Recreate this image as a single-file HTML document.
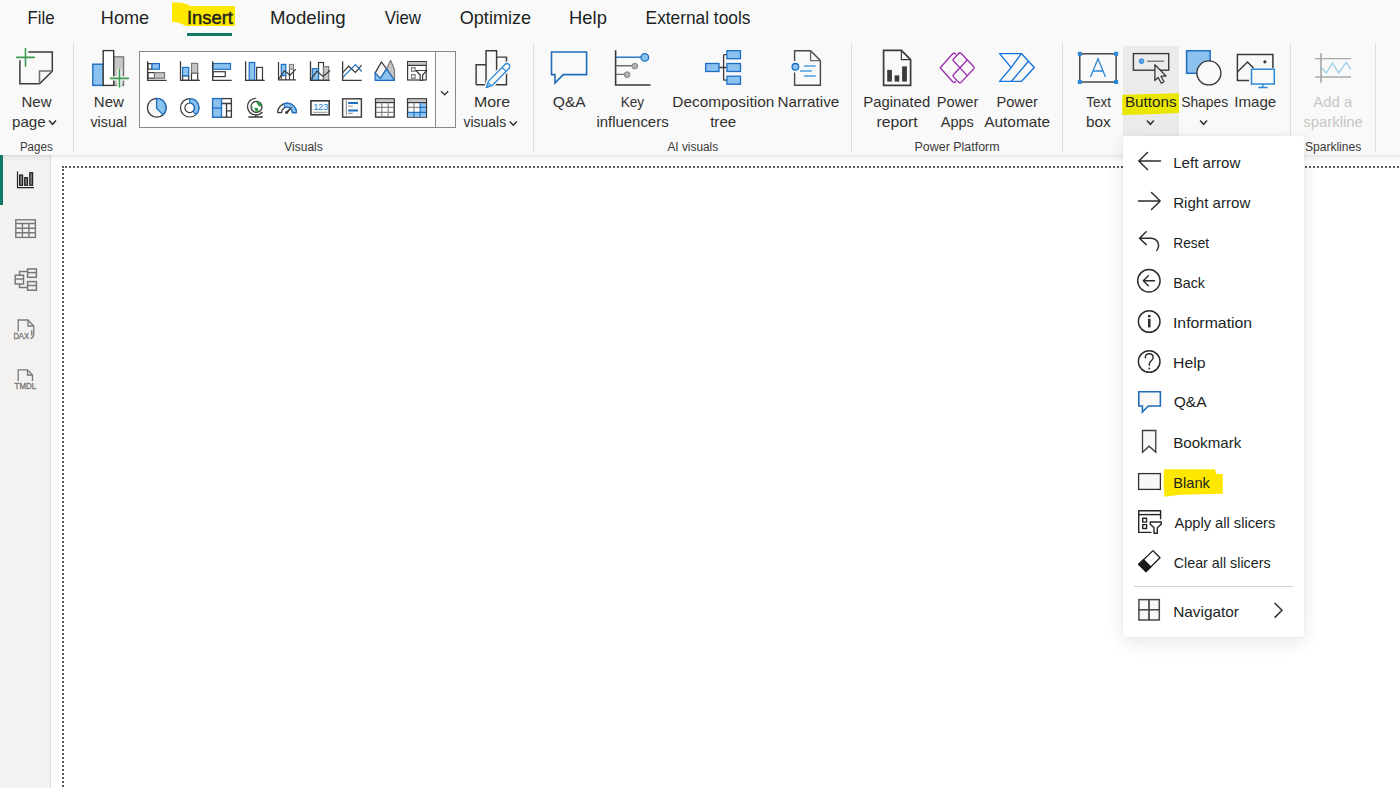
<!DOCTYPE html>
<html><head><meta charset="utf-8">
<style>
html,body{margin:0;padding:0;width:1400px;height:788px;overflow:hidden;background:#fff;font-family:"Liberation Sans", sans-serif;}
svg{position:absolute;left:0;top:0;display:block}
.menu{position:absolute;left:1123px;top:136px;width:181px;height:501px;background:#fff;border-radius:3px;box-shadow:0 5px 18px rgba(0,0,0,0.10),0 0 3px rgba(0,0,0,0.05);}
</style></head><body>
<svg class="base" width="1400" height="788" viewBox="0 0 1400 788"><defs>
<linearGradient id="shd" x1="0" y1="0" x2="0" y2="1">
<stop offset="0" stop-color="#000" stop-opacity="0.10"/>
<stop offset="0.35" stop-color="#000" stop-opacity="0.04"/>
<stop offset="1" stop-color="#000" stop-opacity="0"/>
</linearGradient>
</defs><rect x="0" y="0" width="1400" height="155" fill="#f9f9f9"/><rect x="0" y="155" width="50" height="633" fill="#f3f2f1"/><rect x="50" y="155" width="1" height="633" fill="#e1dfdd"/><rect x="51" y="155" width="1349" height="633" fill="#ffffff"/><rect x="62" y="166" width="2" height="2" fill="#5a5a5a"/><line x1="65" y1="167" x2="1400" y2="167" stroke="#5a5a5a" stroke-width="2" stroke-dasharray="2 2"/><line x1="63" y1="169" x2="63" y2="788" stroke="#5a5a5a" stroke-width="2" stroke-dasharray="2 2"/><rect x="0" y="155" width="1400" height="6.5" fill="url(#shd)"/><rect x="0" y="155" width="3" height="50" fill="#117865"/><g font-family='"Liberation Sans", sans-serif'><path d="M172,2.5 C180,2 186,3 190,6 L235,6 L235,26 L186,26 C180,23 176,22 172,21.8 Z" fill="#ffe800"/><text x="41.1" y="24" font-size="17.8" fill="#201f1e" text-anchor="middle"  textLength="27.13" lengthAdjust="spacingAndGlyphs">File</text><text x="125" y="24" font-size="17.8" fill="#201f1e" text-anchor="middle"  textLength="48.31" lengthAdjust="spacingAndGlyphs">Home</text><text x="209.9" y="24" font-size="17.8" fill="#201f1e" text-anchor="middle" stroke="#201f1e" stroke-width="0.45" textLength="45.96" lengthAdjust="spacingAndGlyphs">Insert</text><text x="307.85" y="24" font-size="17.8" fill="#201f1e" text-anchor="middle"  textLength="75.66" lengthAdjust="spacingAndGlyphs">Modeling</text><text x="402.9" y="24" font-size="17.8" fill="#201f1e" text-anchor="middle"  textLength="36.28" lengthAdjust="spacingAndGlyphs">View</text><text x="495.4" y="24" font-size="17.8" fill="#201f1e" text-anchor="middle"  textLength="71.23" lengthAdjust="spacingAndGlyphs">Optimize</text><text x="588" y="24" font-size="17.8" fill="#201f1e" text-anchor="middle"  textLength="37.73" lengthAdjust="spacingAndGlyphs">Help</text><text x="698" y="24" font-size="17.8" fill="#201f1e" text-anchor="middle"  textLength="104.77" lengthAdjust="spacingAndGlyphs">External tools</text><rect x="187" y="33" width="45" height="3" fill="#117865"/><rect x="73" y="43" width="1" height="110" fill="#e1dfdd"/><rect x="533" y="43" width="1" height="110" fill="#e1dfdd"/><rect x="851" y="43" width="1" height="110" fill="#e1dfdd"/><rect x="1062" y="43" width="1" height="110" fill="#e1dfdd"/><rect x="1290" y="43" width="1" height="110" fill="#e1dfdd"/><rect x="1375" y="43" width="1" height="110" fill="#e1dfdd"/><text x="36.5" y="107" font-size="14.6" fill="#323130" text-anchor="middle"  textLength="30.03" lengthAdjust="spacingAndGlyphs">New</text><text x="12.016548463356974" y="126.5" font-size="14.6" fill="#323130" text-anchor="start"  textLength="33.66" lengthAdjust="spacingAndGlyphs">page</text><path d="M49.0,120.5 L52.5,124.3 L56.0,120.5" fill="none" stroke="#323130" stroke-width="1.5"/><text x="108.9" y="107" font-size="14.6" fill="#323130" text-anchor="middle"  textLength="30.03" lengthAdjust="spacingAndGlyphs">New</text><text x="108.7" y="126.5" font-size="14.6" fill="#323130" text-anchor="middle"  textLength="36.42" lengthAdjust="spacingAndGlyphs">visual</text><text x="492.1" y="107" font-size="14.6" fill="#323130" text-anchor="middle"  textLength="36.24" lengthAdjust="spacingAndGlyphs">More</text><text x="463.5303482587065" y="126.5" font-size="14.6" fill="#323130" text-anchor="start"  textLength="42.58" lengthAdjust="spacingAndGlyphs">visuals</text><path d="M509.79999999999995,121.4 L513.3,125.2 L516.8,121.4" fill="none" stroke="#323130" stroke-width="1.5"/><text x="569.3" y="107" font-size="14.6" fill="#323130" text-anchor="middle"  textLength="32.93" lengthAdjust="spacingAndGlyphs">Q&amp;A</text><text x="632.4" y="107" font-size="14.6" fill="#323130" text-anchor="middle"  textLength="23.46" lengthAdjust="spacingAndGlyphs">Key</text><text x="632.5" y="126.5" font-size="14.6" fill="#323130" text-anchor="middle"  textLength="72.21" lengthAdjust="spacingAndGlyphs">influencers</text><text x="723.3" y="107" font-size="14.6" fill="#323130" text-anchor="middle"  textLength="102.03" lengthAdjust="spacingAndGlyphs">Decomposition</text><text x="723.2" y="126.5" font-size="14.6" fill="#323130" text-anchor="middle"  textLength="26.06" lengthAdjust="spacingAndGlyphs">tree</text><text x="808.4" y="107" font-size="14.6" fill="#323130" text-anchor="middle"  textLength="61.73" lengthAdjust="spacingAndGlyphs">Narrative</text><text x="896.8" y="107" font-size="14.6" fill="#323130" text-anchor="middle"  textLength="66.94" lengthAdjust="spacingAndGlyphs">Paginated</text><text x="897" y="126.5" font-size="14.6" fill="#323130" text-anchor="middle"  textLength="41.14" lengthAdjust="spacingAndGlyphs">report</text><text x="957.5" y="107" font-size="14.6" fill="#323130" text-anchor="middle"  textLength="41.56" lengthAdjust="spacingAndGlyphs">Power</text><text x="957.3" y="126.5" font-size="14.6" fill="#323130" text-anchor="middle"  textLength="33.10" lengthAdjust="spacingAndGlyphs">Apps</text><text x="1017.2" y="107" font-size="14.6" fill="#323130" text-anchor="middle"  textLength="41.56" lengthAdjust="spacingAndGlyphs">Power</text><text x="1017.2" y="126.5" font-size="14.6" fill="#323130" text-anchor="middle"  textLength="65.90" lengthAdjust="spacingAndGlyphs">Automate</text><text x="1098.6" y="107" font-size="14.6" fill="#323130" text-anchor="middle"  textLength="24.69" lengthAdjust="spacingAndGlyphs">Text</text><text x="1098.4" y="126.5" font-size="14.6" fill="#323130" text-anchor="middle"  textLength="24.89" lengthAdjust="spacingAndGlyphs">box</text><text x="1204.7" y="107" font-size="14.6" fill="#323130" text-anchor="middle"  textLength="47.14" lengthAdjust="spacingAndGlyphs">Shapes</text><path d="M1200.1,120.5 L1203.6,124.3 L1207.1,120.5" fill="none" stroke="#323130" stroke-width="1.5"/><text x="1255.3" y="107" font-size="14.6" fill="#323130" text-anchor="middle"  textLength="41.93" lengthAdjust="spacingAndGlyphs">Image</text><text x="1332.7" y="107" font-size="14.6" fill="#c8c6c4" text-anchor="middle"  textLength="38.95" lengthAdjust="spacingAndGlyphs">Add a</text><text x="1333.1" y="126.5" font-size="14.6" fill="#c8c6c4" text-anchor="middle"  textLength="59.65" lengthAdjust="spacingAndGlyphs">sparkline</text><text x="36.3" y="150.8" font-size="12" fill="#3b3a39" text-anchor="middle"  textLength="32.73" lengthAdjust="spacingAndGlyphs">Pages</text><text x="303.5" y="150.8" font-size="12" fill="#3b3a39" text-anchor="middle"  textLength="38.49" lengthAdjust="spacingAndGlyphs">Visuals</text><text x="692.8" y="150.8" font-size="12" fill="#3b3a39" text-anchor="middle"  textLength="50.71" lengthAdjust="spacingAndGlyphs">AI visuals</text><text x="957.1" y="150.8" font-size="12" fill="#3b3a39" text-anchor="middle"  textLength="85.05" lengthAdjust="spacingAndGlyphs">Power Platform</text><text x="1333.1" y="150.8" font-size="12" fill="#3b3a39" text-anchor="middle"  textLength="56.36" lengthAdjust="spacingAndGlyphs">Sparklines</text><rect x="1123" y="46" width="56" height="90" fill="#ebebeb"/><path d="M1122.3,94.8 L1150,94 L1179,93.3 L1179,112.9 L1150,114.2 L1122.3,114.9 Z" fill="#ece700"/><text x="1150.8" y="107" font-size="14.6" fill="#201f1e" text-anchor="middle"  textLength="51.77" lengthAdjust="spacingAndGlyphs">Buttons</text><path d="M1146.9,120.5 L1150.4,124.3 L1153.9,120.5" fill="none" stroke="#323130" stroke-width="1.5"/></g><g fill="none" stroke="#3b3a39" stroke-width="1.5" stroke-linejoin="miter"><path d="M28.4,51.9 L52.3,51.9 L52.3,71.2 L39.5,83.7 L19.9,83.7 L19.9,60.3"/><path d="M39.5,83.7 L39.5,70.9 L52.3,70.9" stroke="#6f6e6d"/></g><path d="M16.1,57.4 L34.8,57.4 M25.5,48.1 L25.5,66.8" stroke="#3b9b50" stroke-width="1.6"/><rect x="113.7" y="56.8" width="9.9" height="28.6" fill="#c8c6c4" stroke="#7a7877" stroke-width="1.3"/><rect x="92.8" y="64.2" width="10.4" height="21.2" fill="#8cc2ef" stroke="#1b6ec2" stroke-width="1.4"/><rect x="103.2" y="50.6" width="10.5" height="34.8" fill="#ffffff" stroke="#3b3a39" stroke-width="1.4"/><path d="M109.9,78.4 L128.9,78.4 M119.5,69.1 L119.5,87.5" stroke="#f9f9f9" stroke-width="4.4"/><path d="M109.9,78.4 L128.9,78.4 M119.5,69.1 L119.5,87.5" stroke="#3b9b50" stroke-width="1.6"/><rect x="139.5" y="51.5" width="316" height="76" fill="#ffffff" stroke="#8a8886" stroke-width="1"/><rect x="435.5" y="52" width="19.5" height="75" fill="#f9f9f9"/><line x1="435.5" y1="51.5" x2="435.5" y2="127.5" stroke="#8a8886" stroke-width="1"/><path d="M441,91.2 L444.6,94.8 L448.2,91.2" fill="none" stroke="#3b3a39" stroke-width="1.4"/><g stroke-width="1.2"><rect x="148" y="63.6" width="4" height="5.6" fill="#ffffff" stroke="#3b3a39"/><rect x="152" y="63.6" width="7.4" height="5.6" fill="#8cc2ef" stroke="#1b6ec2"/><rect x="148" y="72.6" width="6.5" height="5.6" fill="#ffffff" stroke="#3b3a39"/><rect x="154.5" y="72.6" width="10" height="5.6" fill="#c8c6c4" stroke="#7a7877"/><path d="M147.6,61.3 L147.6,80.3 L166.7,80.3" fill="none" stroke="#3b3a39" stroke-width="1.3"/></g><g stroke-width="1.2"><rect x="182.6" y="75.8" width="6.1" height="4.5" fill="#ffffff" stroke="#3b3a39"/><rect x="182.6" y="67.4" width="6.1" height="8.4" fill="#8cc2ef" stroke="#1b6ec2"/><rect x="191.5" y="73" width="6.2" height="7.3" fill="#ffffff" stroke="#3b3a39"/><rect x="191.5" y="63.4" width="6.2" height="9.6" fill="#c8c6c4" stroke="#7a7877"/><path d="M180.5,61.3 L180.5,80.3 L199.8,80.3" fill="none" stroke="#3b3a39" stroke-width="1.3"/></g><g stroke-width="1.2"><rect x="213" y="63.5" width="17.5" height="5.8" fill="#8cc2ef" stroke="#1b6ec2"/><rect x="213" y="71.7" width="12.3" height="4.9" fill="#ffffff" stroke="#3b3a39"/><path d="M212.7,61.3 L212.7,80.3 L231.7,80.3" fill="none" stroke="#3b3a39" stroke-width="1.3"/></g><g stroke-width="1.2"><rect x="249.2" y="62.5" width="5.5" height="17.8" fill="#8cc2ef" stroke="#1b6ec2"/><rect x="256.6" y="67.4" width="5.9" height="12.9" fill="#ffffff" stroke="#3b3a39"/><path d="M245.6,61.3 L245.6,80.3 L264.7,80.3" fill="none" stroke="#3b3a39" stroke-width="1.3"/></g><g stroke-width="1"><rect x="281.3" y="64.4" width="4.5" height="11.2" fill="#8cc2ef" stroke="#1b6ec2" stroke-width="1.2"/><path d="M281.3,75.6 L281.3,80 M285.8,75.6 L285.8,80 M289.4,69.2 L289.4,80 M293.5,69.2 L293.5,80" stroke="#3b3a39"/><rect x="289.4" y="64.4" width="4.1" height="4.8" fill="#c8c6c4" stroke="#7a7877"/><path d="M279,78.7 L284.4,70.8 L290,75.1 L295.9,69.2" fill="none" stroke="#3b3a39" stroke-width="1.2"/><path d="M278.5,61.9 L278.5,79.9 L295.9,79.9" fill="none" stroke="#3b3a39" stroke-width="1.2"/></g><g stroke-width="1.2"><rect x="318.5" y="62.5" width="5" height="17.8" fill="#ffffff" stroke="#3b3a39"/><rect x="323.5" y="66.7" width="5.2" height="13.6" fill="#c8c6c4" stroke="#7a7877"/><rect x="312.3" y="68.7" width="6.2" height="11.6" fill="#8cc2ef" stroke="#1b6ec2"/><path d="M311,79.3 L316.9,71.1 L323.1,76.4 L330,70.5" fill="none" stroke="#3b3a39"/><path d="M310.5,61.3 L310.5,80.3 L329.7,80.3" fill="none" stroke="#3b3a39" stroke-width="1.3"/></g><g fill="none" stroke-width="1.2"><path d="M342.6,72.8 L348.5,66.2 L355.4,72.4 L361.7,65.2" stroke="#3b3a39"/><path d="M342.6,77.7 L355.4,64.6 L361.7,71.5" stroke="#1b6ec2"/><path d="M342.6,61.3 L342.6,80.3 L361.7,80.3" stroke="#3b3a39" stroke-width="1.3"/></g><g stroke-width="1.2" stroke-linejoin="round"><path d="M386.6,68.8 L390.6,60.3 L394.5,69.8 L394.5,80.3 Z" fill="#c8c6c4" stroke="#7a7877"/><path d="M375.1,73.1 L381.4,61.9 L386.6,68.8 L380.4,78.4 Z" fill="#f7f7f7" stroke="#3b3a39"/><path d="M375.1,73.1 L380.4,78.4 L386.6,68.8 L394.5,80.3 L375.1,80.3 Z" fill="#8cc2ef" stroke="#1b6ec2"/></g><g stroke-width="1.2"><rect x="407.6" y="61.6" width="18.6" height="18.4" fill="#ffffff" stroke="#3b3a39"/><rect x="408.2" y="62.2" width="17.4" height="3" fill="#c8c6c4"/><line x1="407.6" y1="65.4" x2="426.2" y2="65.4" stroke="#3b3a39"/><rect x="411.5" y="67.7" width="3.6" height="3.6" fill="none" stroke="#7a7877"/><rect x="411.5" y="74.6" width="3.6" height="3.6" fill="none" stroke="#7a7877"/><path d="M416,70.5 L426.8,70.5 L422.6,75 L422.6,80.4 L420.2,80.4 L420.2,75 Z" fill="#ffffff" stroke="#3b3a39" stroke-linejoin="round"/></g><g stroke-width="1.3"><circle cx="156.8" cy="107.8" r="9.4" fill="#f7f7f7" stroke="#3b3a39"/><path d="M156.6,98.4 A9.4,9.4 0 0 1 163,114.6 L156.6,108.4 Z" fill="#8cc2ef" stroke="#1b6ec2" stroke-linejoin="round"/></g><g stroke-width="1.2" fill="none"><circle cx="189.7" cy="107.8" r="9.2" stroke="#3b3a39"/><circle cx="189.7" cy="107.8" r="4.8" stroke="#3b3a39"/><path d="M189.7,98.6 A9.2,9.2 0 0 1 195.9,114.6 L193,111.3 A4.8,4.8 0 0 0 189.7,103 Z" fill="#8cc2ef" stroke="#1b6ec2"/></g><g stroke-width="1.3"><rect x="212.6" y="98.6" width="18.8" height="18.6" fill="#ffffff" stroke="#3b3a39"/><path d="M221.5,103.5 L231.4,103.5 M226.5,103.5 L226.5,117.2 M226.5,110.8 L231.4,110.8" stroke="#3b3a39" fill="none"/><rect x="212.6" y="98.6" width="8.9" height="18.6" fill="#8cc2ef" stroke="#1b6ec2"/><line x1="212.6" y1="108.1" x2="221.5" y2="108.1" stroke="#1b6ec2"/></g><g stroke-width="1.3" fill="none" stroke="#3b3a39"><circle cx="256.5" cy="106.8" r="5.5" fill="#ffffff"/><path d="M256.2,101.8 C258,101.3 260.5,102.2 261.3,104.2 L261.6,106.3 L259.2,106.5 L257.5,104.5 Z" fill="#2f9a47" stroke="none"/><path d="M254.3,107.7 L257.8,107.9 L258.5,111 L257,112 L255,110.5 Z" fill="#2f9a47" stroke="none"/><path d="M251.6,104.5 C251.3,106 251.3,108 251.9,109.3 L252.6,107 Z" fill="#2f9a47" stroke="none"/><path d="M255.8,98.4 C251,98.3 247.5,102 247.5,106.6 C247.5,111.3 251.3,114.9 255.8,114.9 C258.6,114.9 261,113.8 262.5,112"/><path d="M255.8,114.9 L255.8,117 M248.4,117.1 L262.8,117.1" stroke-width="1.5"/></g><g stroke-width="1.2"><path d="M277.6,112.6 A9.4,9.4 0 0 1 296.4,112.6 L292.4,112.6 A5.4,5.4 0 0 0 281.6,112.6 Z" fill="#f7f7f7" stroke="#3b3a39" stroke-linejoin="round"/><path d="M283.6,103.8 A9.4,9.4 0 0 1 296.4,112.6 L292.4,112.6 A5.4,5.4 0 0 0 285.2,107.5 Z" fill="#8cc2ef" stroke="#1b6ec2" stroke-linejoin="round"/><path d="M285.6,112.3 L291.6,107.2 L287.2,113.4 Z" fill="#3b3a39" stroke="#3b3a39" stroke-width="0.8" stroke-linejoin="round"/><circle cx="286.4" cy="112.6" r="1.3" fill="#3b3a39"/></g><g><rect x="310.9" y="100.8" width="18.3" height="14" fill="#fafafa" stroke="#3b3a39" stroke-width="1.6"/><text x="320.5" y="110.3" font-size="9.6" fill="#2a8ad8" text-anchor="middle" font-family="Liberation Sans, sans-serif" letter-spacing="-0.5">123</text><line x1="313" y1="112.3" x2="327.5" y2="112.3" stroke="#8a8886" stroke-width="0.9"/></g><g><rect x="342.6" y="98.8" width="18.8" height="18.3" fill="#fafafa" stroke="#3b3a39" stroke-width="1.4"/><line x1="346.3" y1="100.5" x2="346.3" y2="115.2" stroke="#8a8886" stroke-width="1"/><path d="M348.2,102.9 L358,102.9 M348.2,110.4 L358,110.4" stroke="#1b6ec2" stroke-width="2"/><path d="M348.2,106.2 L352.8,106.2 M348.2,113.4 L352.8,113.4" stroke="#a19f9d" stroke-width="1.1"/></g><g><rect x="375.6" y="98.8" width="18.6" height="18.3" fill="#ffffff" stroke="#3b3a39" stroke-width="1.4"/><rect x="376.3" y="99.5" width="17.2" height="3.2" fill="#c8c6c4"/><path d="M375.6,102.6 L394.2,102.6" stroke="#3b3a39" stroke-width="1.2"/><path d="M376,107.3 L394,107.3 M376,112.3 L394,112.3 M381.8,102.6 L381.8,117 M388.2,102.6 L388.2,117" stroke="#8a8886" stroke-width="1.2"/></g><g><rect x="407.6" y="98.8" width="18.8" height="18.3" fill="#ffffff" stroke="#3b3a39" stroke-width="1.4"/><rect x="408.3" y="99.5" width="17.4" height="3.2" fill="#c8c6c4"/><rect x="420.1" y="102.8" width="5.9" height="14" fill="#8cc2ef"/><rect x="408.3" y="112.4" width="17.7" height="4.5" fill="#8cc2ef"/><path d="M407.6,102.6 L426.4,102.6" stroke="#3b3a39" stroke-width="1.2"/><path d="M408,107.3 L420.1,107.3 M414,102.6 L414,112.4" stroke="#8a8886" stroke-width="1.2"/><path d="M420.1,102.6 L420.1,117 M420.1,107.3 L426,107.3 M408,112.3 L426,112.3 M414,112.3 L414,117" stroke="#1b6ec2" stroke-width="1.2"/></g><g fill="none" stroke="#3b3a39" stroke-width="1.45"><path d="M476.1,84.8 L476.1,64.7 L486.05,64.7"/><path d="M486.05,84.8 L486.05,50.7 L496.6,50.7 L496.6,84.8"/><path d="M496.6,57.1 L506.5,57.1 L506.5,84.8 L476.1,84.8"/></g><g transform="translate(486.2,87.6) rotate(-45.5)"><path d="M0,0 L6,-2.8 L29.6,-2.8 A2.8,2.8 0 0 1 29.6,2.8 L6,2.8 Z" fill="#f9f9f9" stroke="#f9f9f9" stroke-width="4.2" stroke-linejoin="round"/><path d="M0,0 L6,-2.8 L29.6,-2.8 A2.8,2.8 0 0 1 29.6,2.8 L6,2.8 Z" fill="#f9f9f9" stroke="#2b88d8" stroke-width="1.3" stroke-linejoin="round"/><path d="M0.6,0 L5.2,-2.2 L5.2,2.2 Z" fill="#8cc2ef" stroke="#2b88d8" stroke-width="0.9" stroke-linejoin="round"/><path d="M25.5,-2.8 L25.5,2.8" stroke="#2b88d8" stroke-width="1.2"/></g><path d="M551.5,52 L586.6,52 L586.6,74.6 L563.2,74.6 L555,83 L555,74.6 L551.5,74.6 Z" fill="none" stroke="#1f6cb8" stroke-width="1.6" stroke-linejoin="miter"/><g fill="none" stroke-width="1.6"><path d="M615.6,50.2 L615.6,85 L650.6,85" stroke="#3b3a39"/><path d="M615.6,57.2 L645,57.2" stroke="#1b6ec2" stroke-width="1.4"/><path d="M615.6,65.8 L633,65.8 M615.6,74.4 L625,74.4" stroke="#6f6e6d" stroke-width="1.4"/></g><circle cx="644.8" cy="57.4" r="3.8" fill="#8cc2ef" stroke="#1b6ec2" stroke-width="1.3"/><circle cx="634.8" cy="66.1" r="2.9" fill="#b3b0ad" stroke="#8a8886" stroke-width="1"/><circle cx="627.1" cy="74.7" r="2.9" fill="#b3b0ad" stroke="#8a8886" stroke-width="1"/><g stroke-width="1.3"><path d="M719,67.5 L723.6,67.5 M723.6,54.7 L723.6,80.2 M723.6,54.7 L726.7,54.7 M723.6,80.2 L726.7,80.2 M723.6,67.5 L726.7,67.5" stroke="#3b3a39" fill="none"/><rect x="705.7" y="63.5" width="13.3" height="8" fill="#8cc2ef" stroke="#1b6ec2"/><rect x="726.9" y="50.7" width="13.6" height="8" fill="#8cc2ef" stroke="#1b6ec2"/><rect x="726.9" y="63.5" width="13.6" height="8" fill="#8cc2ef" stroke="#1b6ec2"/><rect x="726.9" y="76.2" width="13.6" height="8" fill="#8cc2ef" stroke="#1b6ec2"/></g><g fill="none" stroke="#3b3a39" stroke-width="1.4"><path d="M794.6,61 L794.6,50.8 L810.6,50.8 L820.4,60.6 L820.4,85.2 L794.6,85.2 L794.6,72.4" stroke="#484644"/><path d="M810.6,50.8 L810.6,60.6 L820.4,60.6" stroke="#6f6e6d"/></g><circle cx="795.4" cy="66.8" r="3.3" fill="#8cc2ef" stroke="#1b6ec2" stroke-width="1.3"/><path d="M803.9,66 L815.8,66 M800,71 L811.8,71 M803.9,76 L815.8,76" stroke="#4a9de0" stroke-width="1.5"/><g fill="none" stroke="#3b3a39" stroke-width="1.7"><path d="M883.6,50.4 L901.4,50.4 L910.6,59.6 L910.6,85.4 L883.6,85.4 Z" stroke-linejoin="miter"/><path d="M901.4,50.4 L901.4,59.6 L910.6,59.6" stroke-width="1.2"/></g><rect x="887.2" y="69.9" width="4.7" height="11.7" fill="#3b3a39"/><rect x="894.6" y="75.4" width="4.7" height="6.2" fill="#3b3a39"/><rect x="902.1" y="66.4" width="4.8" height="15.2" fill="#3b3a39"/><g fill="none" stroke="#9b30b0" stroke-width="1.35" stroke-linejoin="round" stroke-linecap="round"><path d="M955.6,54.1 C954.8,53 953.5,53 952.7,53.8 L940.2,67.8 L952.7,81.8 C953.5,82.6 954.8,82.6 955.6,81.5"/><path d="M958.9,53.2 C959.5,52.6 960.4,52.6 961,53.2 L973.8,66.8 C974.3,67.4 974.3,68.2 973.8,68.8 L961,82.4 C960.4,83 959.5,83 958.9,82.4"/><path d="M958.9,53.2 L953.4,59 C952.9,59.5 952.9,60.3 953.4,60.8 L967.2,75.6"/><path d="M958.9,82.4 L953.4,76.6 C952.9,76.1 952.9,75.3 953.4,74.8 L967.2,60"/></g><g fill="none" stroke="#1674db" stroke-width="1.4" stroke-linejoin="round"><path d="M999.6,53.6 L1021.3,53.6 L1034.3,67.6 L1021.3,81.4 L999.6,81.4 L1011.2,67.6 Z"/><path d="M1011.2,67.6 L1021.3,53.6 M1011.4,81.4 L1028.4,61.3"/></g><rect x="1079.8" y="53.8" width="36.3" height="28.2" fill="none" stroke="#3b3a39" stroke-width="1.4"/><rect x="1077.8" y="51.8" width="4" height="4" fill="#2b88d8"/><rect x="1114.1" y="51.8" width="4" height="4" fill="#2b88d8"/><rect x="1077.8" y="80" width="4" height="4" fill="#2b88d8"/><rect x="1114.1" y="80" width="4" height="4" fill="#2b88d8"/><path d="M1090.5,77 L1098,58.8 L1105.5,77 M1093,71 L1103,71" fill="none" stroke="#2b88d8" stroke-width="1.3"/><rect x="1133.4" y="53.6" width="35.3" height="16.6" fill="none" stroke="#3b3a39" stroke-width="1.4"/><circle cx="1141.5" cy="61.2" r="2.4" fill="#5aa3e6" stroke="#2b88d8" stroke-width="0.9"/><path d="M1147.2,61.2 L1163.8,61.2" stroke="#6f6e6d" stroke-width="1.3"/><path d="M1154.9,64.8 L1154.9,80.5 L1158.2,77.5 L1161.3,83.3 L1164,81.8 L1161,76.2 L1166,76 Z" fill="#ebebeb" stroke="#3b3a39" stroke-width="1.3" stroke-linejoin="round"/><rect x="1186.6" y="50.8" width="23.5" height="22.5" fill="#8cc2ef" stroke="#1b6ec2" stroke-width="1.5"/><circle cx="1208.9" cy="72.9" r="12" fill="#f9f9f9" stroke="#3b3a39" stroke-width="1.4"/><g fill="none" stroke="#3b3a39" stroke-width="1.5"><path d="M1249,80.4 L1237.4,80.4 L1237.4,54.6 L1272.9,54.6 L1272.9,68"/><path d="M1237.4,72 L1247.5,62 L1253.5,68"/></g><circle cx="1264.9" cy="61.8" r="1.6" fill="#3b3a39"/><rect x="1251.5" y="69.2" width="22.8" height="14.8" fill="#f9f9f9" stroke="#2b88d8" stroke-width="1.5"/><path d="M1262.9,84 L1262.9,87.2 M1258.3,87.5 L1267.5,87.5" stroke="#2b88d8" stroke-width="1.4"/><g fill="none" stroke-width="1.3"><path d="M1321,53.2 L1321,82.6" stroke="#a8a8a8" stroke-width="1.7"/><path d="M1315.2,58.7 L1351.1,58.7 M1315.2,77 L1351.1,77" stroke="#a8a8a8"/><path d="M1321.8,68.3 L1326.3,73 L1332.5,62.9 L1338.6,73 L1346.3,62.4 L1350.8,69.3" stroke="#9ccbe8"/></g><g fill="none" stroke="#252423" stroke-width="1.2"><path d="M17.5,171.6 L17.5,187.6 L33.9,187.6"/><rect x="19.6" y="175" width="3" height="10.3" fill="#7a7a7a"/><rect x="24.7" y="177.6" width="2.8" height="7.7" fill="#7a7a7a"/><rect x="29.8" y="172.7" width="2.8" height="12.6" fill="#7a7a7a"/></g><g fill="none" stroke="#7a7877" stroke-width="1.4"><rect x="15.8" y="219.8" width="19.6" height="17.6"/><path d="M15.8,223.5 L35.4,223.5 M15.8,228.3 L35.4,228.3 M15.8,232.8 L35.4,232.8 M22.4,223.5 L22.4,237.4 M28.9,223.5 L28.9,237.4"/></g><g fill="none" stroke="#7a7877" stroke-width="1.5"><rect x="15.2" y="275.2" width="8.3" height="8.8"/><path d="M15.2,279 L23.5,279"/><rect x="27.6" y="268.9" width="8.8" height="8.4"/><path d="M27.6,272.6 L36.4,272.6"/><rect x="27.6" y="281.6" width="8.8" height="8.6"/><path d="M27.6,285.5 L36.4,285.5"/><path d="M19.6,275.2 L19.6,271.4 L27.6,271.4 M19.6,284 L19.6,287.5 L27.6,287.5"/></g><g fill="none" stroke="#7a7877" stroke-width="1.3"><path d="M18.2,331.5 L18.2,320 L28,320 L33.8,326 L33.8,333.5 C33.8,336 32.5,338 30.5,338.5"/><path d="M28,320 L28,326 L33.8,326"/><path d="M31.8,330 L31.8,335.5"/></g><text x="21.2" y="339.3" font-size="8.9" fill="#7a7877" stroke="#7a7877" stroke-width="0.35" text-anchor="middle" textLength="15.6" lengthAdjust="spacingAndGlyphs" font-family="Liberation Sans, sans-serif">DAX</text><g fill="none" stroke="#7a7877" stroke-width="1.3"><path d="M18.2,381 L18.2,369.8 L27.5,369.8 L32.5,375 L32.5,381"/><path d="M27.5,369.8 L27.5,375 L32.5,375"/></g><text x="25.4" y="389.3" font-size="8.9" fill="#7a7877" stroke="#7a7877" stroke-width="0.35" text-anchor="middle" textLength="21.6" lengthAdjust="spacingAndGlyphs" font-family="Liberation Sans, sans-serif">TMDL</text></svg>
<div class="menu"></div>
<svg width="1400" height="788" viewBox="0 0 1400 788" font-family='"Liberation Sans", sans-serif' style="position:absolute;left:0;top:0"><path d="M1163.8,469.3 L1214.5,469.2 C1215.6,469.4 1215.8,473.3 1216.6,473.9 L1222.8,474.1 L1222.8,493.8 L1180,494.8 L1164.2,496.8 L1164.2,488.5 L1163.6,488.3 Z" fill="#ffe800"/><text x="1173.19" y="168" font-size="14.8" fill="#201f1e" textLength="67.15" lengthAdjust="spacingAndGlyphs">Left arrow</text><text x="1173.19" y="207.8" font-size="14.8" fill="#201f1e" textLength="77.08" lengthAdjust="spacingAndGlyphs">Right arrow</text><text x="1173.30" y="247.6" font-size="14.8" fill="#201f1e" textLength="35.80" lengthAdjust="spacingAndGlyphs">Reset</text><text x="1173.26" y="287.7" font-size="14.8" fill="#201f1e" textLength="31.72" lengthAdjust="spacingAndGlyphs">Back</text><text x="1172.98" y="327.6" font-size="14.8" fill="#201f1e" textLength="79.19" lengthAdjust="spacingAndGlyphs">Information</text><text x="1173.13" y="367.8" font-size="14.8" fill="#201f1e" textLength="32.52" lengthAdjust="spacingAndGlyphs">Help</text><text x="1173.70" y="407.4" font-size="14.8" fill="#201f1e" textLength="32.93" lengthAdjust="spacingAndGlyphs">Q&amp;A</text><text x="1173.19" y="447.6" font-size="14.8" fill="#201f1e" textLength="68.03" lengthAdjust="spacingAndGlyphs">Bookmark</text><text x="1173.23" y="487.8" font-size="14.8" fill="#201f1e" textLength="36.70" lengthAdjust="spacingAndGlyphs">Blank</text><text x="1174.40" y="527.9" font-size="14.8" fill="#201f1e" textLength="100.93" lengthAdjust="spacingAndGlyphs">Apply all slicers</text><text x="1173.69" y="567.7" font-size="14.8" fill="#201f1e" textLength="96.91" lengthAdjust="spacingAndGlyphs">Clear all slicers</text><text x="1173.17" y="616.5" font-size="14.8" fill="#201f1e" textLength="65.84" lengthAdjust="spacingAndGlyphs">Navigator</text><rect x="1134" y="586" width="159" height="1" fill="#d2d0ce"/><path d="M1160.5,161 L1138.8,161 M1147.5,152.6 L1138.8,161 L1147.5,169.4" fill="none" stroke="#2d2c2b" stroke-width="1.45" stroke-linecap="round" stroke-linejoin="round"/><path d="M1138.5,201 L1160.2,201 M1151.5,192.6 L1160.2,201 L1151.5,209.4" fill="none" stroke="#2d2c2b" stroke-width="1.45" stroke-linecap="round" stroke-linejoin="round"/><path d="M1146.2,231.8 L1139.5,238.3 L1146.2,244.6 M1139.5,238.3 L1151,238.3 C1155.5,238.3 1158.6,241.5 1158.6,245.2 C1158.6,247 1158,248.8 1156.8,250.4" fill="none" stroke="#2d2c2b" stroke-width="1.45" stroke-linecap="round" stroke-linejoin="round"/><circle cx="1148.9" cy="280.8" r="11.2" fill="none" stroke="#2d2c2b" stroke-width="1.45" stroke-linecap="round" stroke-linejoin="round"/><path d="M1154.6,280.8 L1143.3,280.8 M1148.3,275.8 L1143.3,280.8 L1148.3,285.8" fill="none" stroke="#2d2c2b" stroke-width="1.45" stroke-linecap="round" stroke-linejoin="round"/><circle cx="1149.2" cy="321.5" r="10.8" fill="none" stroke="#2d2c2b" stroke-width="1.45" stroke-linecap="round" stroke-linejoin="round"/><rect x="1148" y="318.8" width="2.5" height="8.6" fill="#2d2c2b"/><rect x="1148" y="315" width="2.5" height="2.3" fill="#2d2c2b"/><circle cx="1149.2" cy="361.5" r="10.8" fill="none" stroke="#2d2c2b" stroke-width="1.45" stroke-linecap="round" stroke-linejoin="round"/><path d="M1145.3,357.8 C1145.3,355.3 1147,353.8 1149.2,353.8 C1151.6,353.8 1153.2,355.4 1153.2,357.6 C1153.2,360.6 1149.3,361 1149.3,364.2 L1149.3,365.3" fill="none" stroke="#2d2c2b" stroke-width="1.45" stroke-linecap="round" stroke-linejoin="round"/><circle cx="1149.3" cy="368.6" r="1" fill="#323130"/><path d="M1138.8,391.8 L1160.4,391.8 L1160.4,406 L1148.3,406 L1142.4,412 L1142.4,406 L1138.8,406 Z" fill="#f8f8f8" stroke="#1f6cb8" stroke-width="1.6" stroke-linejoin="miter"/><path d="M1142.5,430.5 L1155.8,430.5 L1155.8,452.3 L1149.1,446.2 L1142.5,452.3 Z" fill="#f8f8f8" stroke="#3b3a39" stroke-width="1.3" stroke-linejoin="miter"/><rect x="1138.6" y="473.6" width="21.8" height="15.8" fill="#f8f8f8" stroke="#323130" stroke-width="1.3"/><g fill="none" stroke="#252423" stroke-width="1.4" stroke-linejoin="round"><path d="M1151.5,532.4 L1138.7,532.4 L1138.7,510.8 L1160.6,510.8 L1160.6,519.3"/><path d="M1138.7,514.6 L1160.6,514.6"/><rect x="1142.7" y="518.2" width="3.9" height="3.9"/><rect x="1142.7" y="524.6" width="3.9" height="3.9"/><path d="M1150.2,522 L1161.2,522 L1161.2,524.2 L1157.3,527.8 L1157.3,533.2 L1154,533.2 L1154,527.8 L1150.2,524.2 Z"/></g><path d="M1153,550.6 L1160,557.8 L1146,571.6 L1138.7,564.3 Z" fill="#fff" stroke="#1b1a19" stroke-width="1.3" stroke-linejoin="round"/><path d="M1138.7,564.3 L1143.5,559.6 L1150.8,566.9 L1146,571.6 Z" fill="#1b1a19" stroke="#1b1a19" stroke-width="1.3" stroke-linejoin="round"/><g fill="#f8f8f8" stroke="#4a4847" stroke-width="1.5"><rect x="1138.9" y="599.6" width="10.2" height="10.2"/><rect x="1149.1" y="599.6" width="10.2" height="10.2"/><rect x="1138.9" y="609.8" width="10.2" height="10.2"/><rect x="1149.1" y="609.8" width="10.2" height="10.2"/></g><path d="M1274.6,603 L1282,610.3 L1274.6,617.6" fill="none" stroke="#323130" stroke-width="1.5"/></svg>
</body></html>
